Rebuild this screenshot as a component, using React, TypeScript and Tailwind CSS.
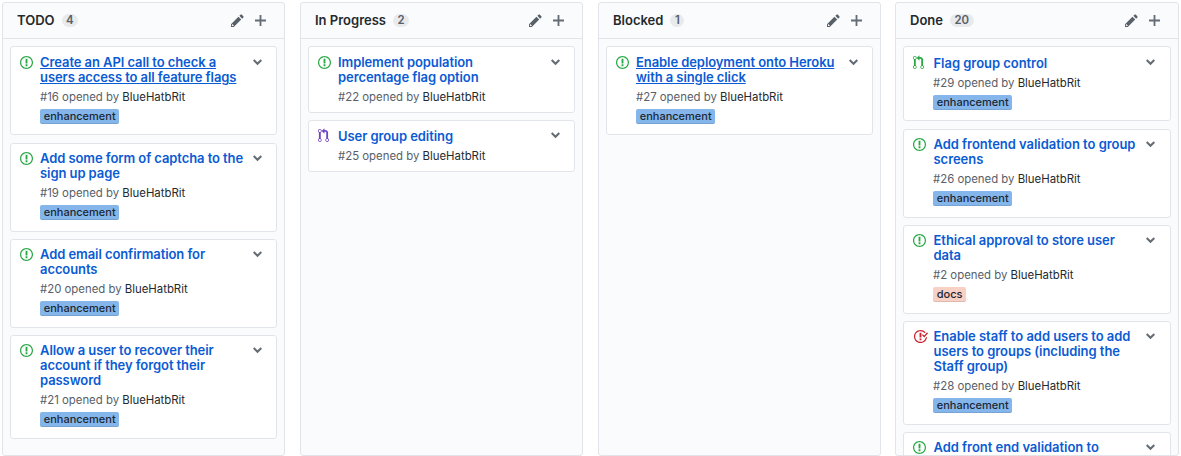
import React from "react";

type IconKind = "open" | "closed" | "pull" | "merged";

interface CardData {
  icon: IconKind;
  title: string[];
  number?: number;
  label?: "enhancement" | "docs";
  underlined?: boolean;
  box: string;
}

interface ColumnData {
  name: string;
  count: number;
  box: string;
  text: string;
  cards: CardData[];
}

const OPEN =
  "M7 2.3c3.14 0 5.7 2.56 5.7 5.7s-2.56 5.7-5.7 5.7A5.71 5.71 0 0 1 1.3 8c0-3.14 2.56-5.7 5.7-5.7zM7 1C3.14 1 0 4.14 0 8s3.14 7 7 7 7-3.14 7-7-3.14-7-7-7zm1 3H6v5h2V4zm0 6H6v2h2v-2z";
const CLOSED =
  "M7 10h2v2H7v-2zm2-6H7v5h2V4zm1.5 1.5l-1 1L12 9l4-4.5-1-1L12 7l-1.5-1.5zM8 13.7A5.71 5.71 0 0 1 2.3 8c0-3.14 2.56-5.7 5.7-5.7 1.83 0 3.45.88 4.5 2.2l.92-.92A6.947 6.947 0 0 0 8 1C4.14 1 1 4.14 1 8s3.14 7 7 7 7-3.14 7-7l-1.52 1.52c-.66 2.41-2.86 4.19-5.48 4.19v-.01z";
const PULL =
  "M11 11.28V5c-.03-.78-.34-1.47-.94-2.06C9.46 2.35 8.78 2.03 8 2H7V0L4 3l3 3V4h1c.27.02.48.11.69.31.21.2.3.42.31.69v6.28A1.993 1.993 0 0 0 10 15a1.993 1.993 0 0 0 1-3.72zm-1 2.92c-.66 0-1.2-.55-1.2-1.2 0-.65.55-1.2 1.2-1.2.65 0 1.2.55 1.2 1.2 0 .65-.55 1.2-1.2 1.2zM4 3c0-1.11-.89-2-2-2a1.993 1.993 0 0 0-1 3.72v6.56A1.993 1.993 0 0 0 2 15a1.993 1.993 0 0 0 1-3.72V4.72c.59-.34 1-.98 1-1.72zm-.8 10c0 .66-.55 1.2-1.2 1.2-.65 0-1.2-.55-1.2-1.2 0-.65.55-1.2 1.2-1.2.65 0 1.2.55 1.2 1.2zM2 4.2C1.34 4.2.8 3.65.8 3c0-.65.55-1.2 1.2-1.2.65 0 1.2.55 1.2 1.2 0 .65-.55 1.2-1.2 1.2z";
const PENCIL =
  "M0 12v3h3l8-8-3-3-8 8zm3 2H1v-2h1v1h1v1zm10.3-9.3L12 6 9 3l1.3-1.3a.996.996 0 0 1 1.41 0l1.59 1.59c.39.39.39 1.02 0 1.41z";
const PLUS = "M12 9H7v5H5V9H0V7h5V2h2v5h5v2z";
const CHEVRON = "M5 11L0 6l1.5-1.5L5 7.75 8.5 4.5 10 6l-5 5z";

const columns: ColumnData[] = [
  {
    name: "TODO",
    count: 4,
    box: "w-[283px] mr-[15px]",
    text: "tracking-[-0.08px]",
    cards: [
      { icon: "open", title: ["Create an API call to check a", "users access to all feature flags"], number: 16, label: "enhancement", underlined: true, box: "h-[89px] mb-2 pt-2 pr-[14px]" },
      { icon: "open", title: ["Add some form of captcha to the", "sign up page"], number: 19, label: "enhancement", box: "h-[89px] mb-[7px] pt-[7px] pr-[14px]" },
      { icon: "open", title: ["Add email confirmation for", "accounts"], number: 20, label: "enhancement", box: "h-[89px] mb-[7px] pt-[7px] pr-[14px]" },
      { icon: "open", title: ["Allow a user to recover their", "account if they forgot their", "password"], number: 21, label: "enhancement", box: "h-[104px] pt-[7px] pr-[14px]" },
    ],
  },
  {
    name: "In Progress",
    count: 2,
    box: "w-[283px] mr-[15px]",
    text: "tracking-[-0.08px]",
    cards: [
      { icon: "open", title: ["Implement population", "percentage flag option"], number: 22, box: "h-[67px] mb-[7px] pt-2 pr-[14px]" },
      { icon: "merged", title: ["User group editing"], number: 25, box: "h-[52px] pt-[7px] pr-[14px]" },
    ],
  },
  {
    name: "Blocked",
    count: 1,
    box: "w-[283px] mr-[14px]",
    text: "tracking-[-0.08px]",
    cards: [
      { icon: "open", title: ["Enable deployment onto Heroku", "with a single click"], number: 27, label: "enhancement", underlined: true, box: "h-[89px] pt-2 pr-[14px]" },
    ],
  },
  {
    name: "Done",
    count: 20,
    box: "w-[284px]",
    text: "pl-[0.5px] tracking-[-0.04px]",
    cards: [
      { icon: "pull", title: ["Flag group control"], number: 29, label: "enhancement", box: "h-[75px] mb-2 pt-2 pr-[15px]" },
      { icon: "open", title: ["Add frontend validation to group", "screens"], number: 26, label: "enhancement", box: "h-[89px] mb-[7px] pt-[7px] pr-[15px]" },
      { icon: "open", title: ["Ethical approval to store user", "data"], number: 2, label: "docs", box: "h-[89px] mb-[7px] pt-[7px] pr-[15px]" },
      { icon: "closed", title: ["Enable staff to add users to add", "users to groups (including the", "Staff group)"], number: 28, label: "enhancement", box: "h-[104px] mb-[7px] pt-[7px] pr-[15px]" },
      { icon: "open", title: ["Add front end validation to"], box: "h-[89px] pt-[7px] pr-[15px]" },
    ],
  },
];

function StatusIcon({ kind }: { kind: IconKind }) {
  if (kind === "closed")
    return (
      <svg viewBox="0 0 16 16" className="h-[15px] w-[15px] fill-[#cb2431]"><path d={CLOSED} /></svg>
    );
  if (kind === "open")
    return (
      <svg viewBox="0 0 14 16" className="h-[15px] w-[13px] fill-[#28a745]"><path d={OPEN} /></svg>
    );
  return (
    <svg viewBox="0 0 12 16" className={`h-[15px] w-[11px] ${kind === "merged" ? "fill-[#6f42c1]" : "fill-[#28a745]"}`}>
      <path d={PULL} />
    </svg>
  );
}

function Card({ card, text }: { card: CardData; text: string }) {
  const lines = card.title.length;
  const offset = lines === 1 && card.number !== undefined;
  return (
    <article className={`flex shrink-0 rounded-[3px] border border-[#e1e4e8] bg-white pl-[9px] ${card.box}`}>
      <div className="w-5 shrink-0">
        <StatusIcon kind={card.icon} />
      </div>
      <div className="min-w-0 flex-1">
        <h3 className={`whitespace-nowrap text-[13px] font-semibold leading-[15px] text-[#0b5bd3] ${text} ${card.underlined ? "underline" : ""} ${offset ? "pt-px" : ""}`}>
          {card.title.map((line) => (
            <span key={line} className="block">{line}</span>
          ))}
        </h3>
        {card.number !== undefined && (
          <p className="mt-[5px] whitespace-nowrap text-[11.4px] leading-[15px] tracking-[-0.01px] text-[#586069]">
            #{card.number} opened by <span className="text-[#24292e]">BlueHatbRit</span>
          </p>
        )}
        {card.label && (
          <span className={`block w-fit rounded-[2px] px-[3.7px] text-[11px] font-medium leading-[15px] text-[#1c2733] shadow-[inset_0_-1px_0_rgba(27,31,35,0.12)] ${lines === 3 ? "mt-1 " : "mt-1"} ${card.label === "docs" ? "bg-[#f9d0c4]" : "bg-[#84b6eb]"}`}>
            {card.label}
          </span>
        )}
      </div>
      <svg viewBox="0 0 10 16" className="h-[15px] w-[9px] shrink-0 fill-[#646c75]"><path d={CHEVRON} /></svg>
    </article>
  );
}

function Column({ column }: { column: ColumnData }) {
  return (
    <section className={`flex shrink-0 flex-col overflow-hidden rounded-[3px] border border-[#e1e4e8] bg-[#fafbfc] ${column.box}`}>
      <header className="flex h-9 shrink-0 items-center border-b border-[#e1e4e8] pl-[14px] pr-[18px]">
        <h2 className="mb-[2px] text-[13px] font-semibold leading-5 text-[#24292e]">{column.name}</h2>
        <span className="mb-px ml-[7px] rounded-full bg-[#e8eaec] px-[4.5px] text-[11.4px] font-semibold leading-[13px] text-[#586069]">{column.count}</span>
        <svg viewBox="0 0 14 16" className="ml-auto h-[15px] w-[13px] fill-[#586069]"><path d={PENCIL} /></svg>
        <svg viewBox="0 0 12 16" className="ml-[11px] h-[15px] w-[11px] fill-[#646c75]"><path d={PLUS} /></svg>
      </header>
      <div className="flex min-h-0 flex-1 flex-col overflow-hidden px-[7px] pt-[7px]">
        {column.cards.map((card) => (
          <Card key={card.title[0]} card={card} text={column.text} />
        ))}
      </div>
    </section>
  );
}

export default function App() {
  return (
    <main className="flex h-[456px] w-[1181px] overflow-hidden bg-white pl-[2px] pt-[2px] font-['Inter','Liberation_Sans',sans-serif]">
      {columns.map((column) => (
        <Column key={column.name} column={column} />
      ))}
    </main>
  );
}
